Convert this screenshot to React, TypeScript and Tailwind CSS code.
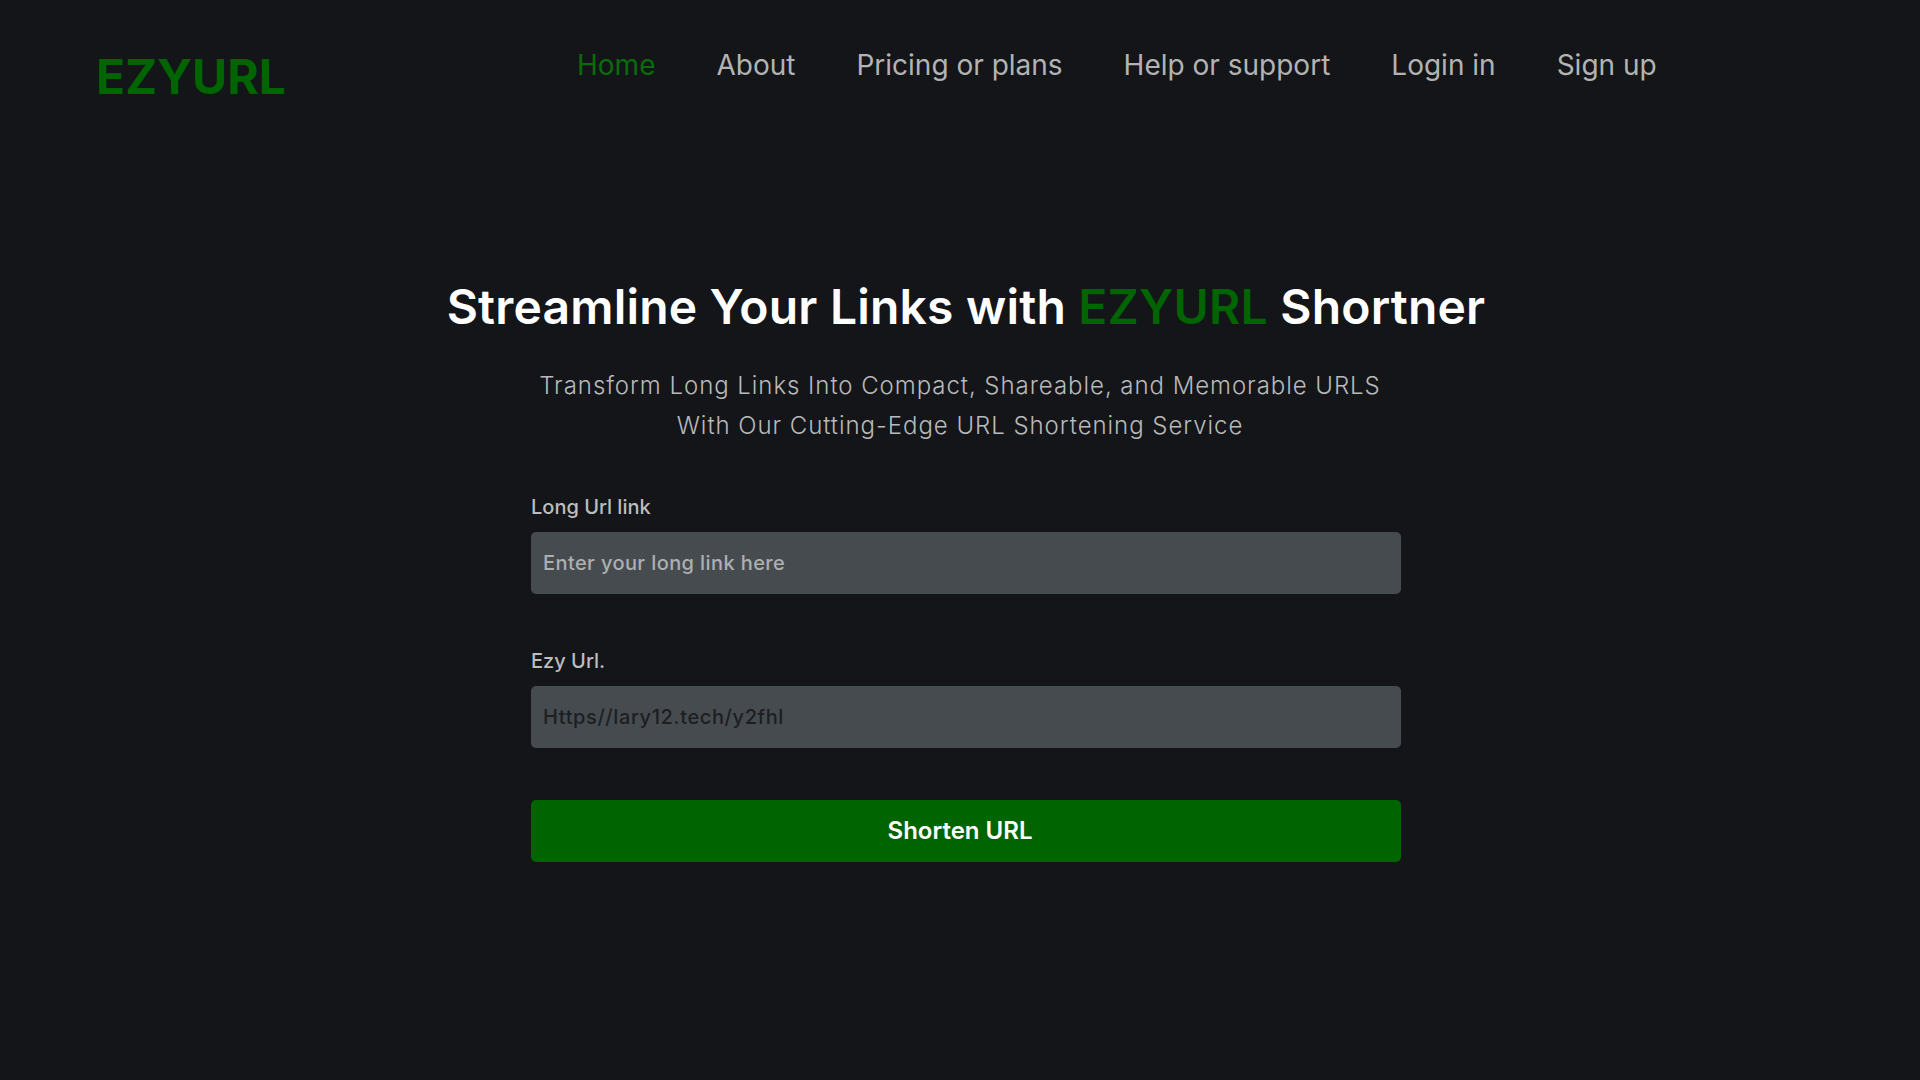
const navItems = ["Home", "About", "Pricing or plans", "Help or support", "Login in", "Sign up"];

export default function App() {
  return (
    <div className="min-h-screen w-full bg-[#131519] font-['Inter',sans-serif]">
      <header className="flex items-start pt-[51px] pl-[96px]">
        <div className="w-[481px] mt-[2px]">
          <span className="text-[48px] leading-[48px] font-bold text-[#006400]">EZYURL</span>
        </div>
        <nav className="flex gap-[61px]">
          {navItems.map((item, i) => (
            <a
              key={item}
              href="#"
              className={
                i === 0
                  ? "text-[28px] leading-[28px] text-[#0b6b0b]"
                  : "text-[28px] leading-[28px] text-[#b3b3b3]"
              }
            >
              {item}
            </a>
          ))}
        </nav>
      </header>

      <main className="flex flex-col items-center pl-3 pt-[177px]">
        <h1 className="text-[48px] leading-[58px] font-semibold text-white tracking-[0.2px]">
          Streamline Your Links with <span className="text-[#006400]">EZYURL</span> Shortner
        </h1>
        <p className="mt-[30px] -ml-3 text-center text-[24px] leading-[40px] font-light tracking-[0.95px] text-[#b9b9b9]">
          Transform Long Links Into Compact, Shareable, and Memorable URLS
          <br />
          With Our Cutting-Edge URL Shortening Service
        </p>

        <form className="mt-[47px] w-[870px] flex flex-col" onSubmit={(e) => e.preventDefault()}>
          <label className="text-[20px] leading-[28px] font-medium text-[#bdbdbd]">Long Url link</label>
          <input
            type="text"
            placeholder="Enter your long link here"
            className="mt-[11px] h-[62px] w-full rounded-[5px] bg-[#464b4f] px-3 text-[20px] font-medium tracking-[0.4px] text-[#d0d0d0] placeholder:text-[#adafb1] outline-none"
          />

          <label className="mt-[53px] text-[20px] leading-[28px] font-medium text-[#bdbdbd]">Ezy Url.</label>
          <input
            type="text"
            readOnly
            defaultValue="Https//lary12.tech/y2fhl"
            className="mt-[11px] h-[62px] w-full rounded-[5px] bg-[#464b4f] px-3 text-[20px] font-medium tracking-[0.6px] text-[#1c1f22] outline-none"
          />

          <button
            type="submit"
            className="mt-[52px] h-[62px] w-full rounded-[5px] bg-[#006400] pr-3 text-[24px] font-semibold text-white"
          >
            Shorten URL
          </button>
        </form>
      </main>
    </div>
  );
}
